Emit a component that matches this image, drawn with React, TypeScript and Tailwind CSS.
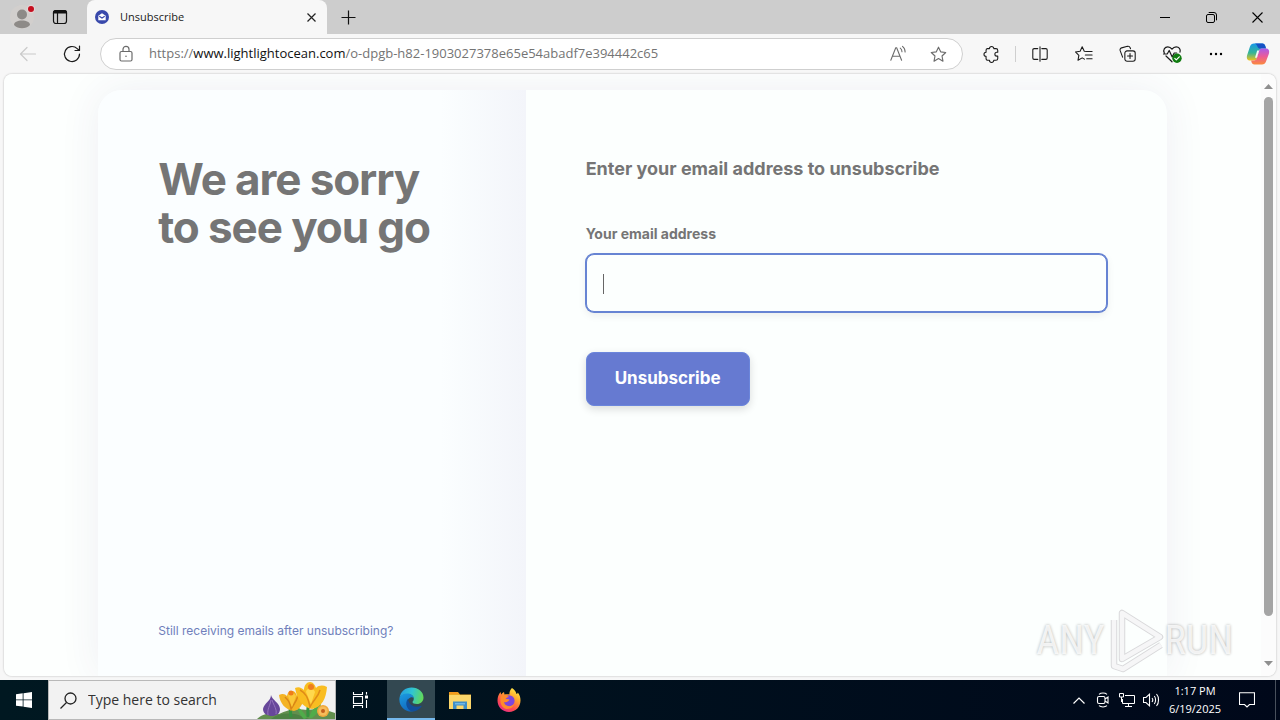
import type { ReactNode } from "react";

const iconBtn = "flex h-8 w-8 items-center justify-center shrink-0";

function Icon({ size = 20, children }: { size?: number; children: ReactNode }) {
  return (
    <svg
      width={size}
      height={size}
      viewBox="0 0 20 20"
      fill="none"
      stroke="currentColor"
      strokeWidth="1.2"
      strokeLinecap="round"
      strokeLinejoin="round"
    >
      {children}
    </svg>
  );
}

function TabBar() {
  return (
    <header className="flex h-[34px] shrink-0 items-stretch bg-[#cdcdcd]">
      <div className="flex w-[87px] items-center rounded-br-lg pl-2">
        <button aria-label="Profile" className="flex h-8 w-7 items-center justify-center">
          <svg width="28" height="28" viewBox="0 0 28 28">
            <circle cx="14" cy="14" r="12" fill="#d2cfcd" />
            <circle cx="14" cy="11.500" r="5" fill="#8d8a87" />
            <path d="M6 22c0-3 3.500-4.500 8-4.500s8 1.500 8 4.500c-2 2.500-5 3.200-8 3.200S8 24.500 6 22z" fill="#8d8a87" />
            <circle cx="23" cy="6" r="4.200" fill="#e3d3d3" />
            <circle cx="23" cy="6" r="3" fill="#c50f1f" />
          </svg>
        </button>
        <button aria-label="Tab actions" className="ml-2 flex h-8 w-8 items-center justify-center">
          <svg width="16" height="16" viewBox="0 0 16 16" fill="none" stroke="#111" strokeWidth="1.200">
            <rect x="1.500" y="1.500" width="13" height="13" rx="2.500" />
            <path d="M1.500 4V3.500a2 2 0 0 1 2-2h9a2 2 0 0 1 2 2V4z" fill="#111" />
            <path d="M5.500 4v10.500" />
          </svg>
        </button>
      </div>
      <div className="flex w-60 items-center rounded-t-lg bg-[#f7f7f7] pr-2 pl-2">
        <svg width="14" height="14" viewBox="0 0 14 14">
          <circle cx="7" cy="7" r="7" fill="#3949ab" />
          <path d="M3.300 5.800 7 3.300l3.700 2.500v4.400H3.300z" fill="#fff" />
          <path d="m4.300 6.300 2.700 1.800 2.700-1.800" stroke="#3949ab" strokeWidth="1.200" fill="none" />
        </svg>
        <span className="ml-[11px] flex-1 text-[11px] text-[#1b1b1b]">Unsubscribe</span>
        <button aria-label="Close tab" className="flex h-4 w-4 items-center justify-center">
          <svg width="9" height="9" viewBox="0 0 9 9" stroke="#222" strokeWidth="1.200">
            <path d="m.5.5 8 8m0-8-8 8" />
          </svg>
        </button>
      </div>
      <button aria-label="New tab" className="flex w-[42px] items-center justify-center">
        <svg width="15" height="15" viewBox="0 0 15 15" stroke="#111" strokeWidth="1.200">
          <path d="M7.500.5v14M.5 7.500h14" />
        </svg>
      </button>
      <div className="ml-auto flex">
        <button aria-label="Minimize" className="flex w-[46px] items-center justify-center">
          <svg width="10" height="10" viewBox="0 0 10 10" stroke="#000">
            <path d="M0 5.500h10" />
          </svg>
        </button>
        <button aria-label="Restore" className="flex w-[46px] items-center justify-center">
          <svg width="11" height="11" viewBox="0 0 11 11" fill="none" stroke="#000">
            <rect x=".5" y="2.500" width="8" height="8" rx="1.500" />
            <path d="M2.700.5h5.300a2.500 2.500 0 0 1 2.500 2.500v5.300" />
          </svg>
        </button>
        <button aria-label="Close window" className="flex w-[46px] items-center justify-center">
          <svg width="11" height="11" viewBox="0 0 11 11" stroke="#000" strokeWidth="1.100">
            <path d="m.5.5 10 10m0-10-10 10" />
          </svg>
        </button>
      </div>
    </header>
  );
}

const star = "m10 2.300 2.300 4.900 5.300.7-3.900 3.700 1 5.400-4.700-2.700L5.300 17l1-5.400L2.400 7.900l5.300-.7z";

function Copilot() {
  return (
    <svg width="24" height="24" viewBox="0 0 24 24">
      <defs>
        <linearGradient id="cpA" x1="0" y1="0" x2="0" y2="1">
          <stop offset="0" stopColor="#1798e8" />
          <stop offset=".55" stopColor="#35b596" />
          <stop offset="1" stopColor="#f2c21c" />
        </linearGradient>
        <linearGradient id="cpB" x1="0" y1="0" x2="0" y2="1">
          <stop offset="0" stopColor="#a95bea" />
          <stop offset=".5" stopColor="#ec5b96" />
          <stop offset="1" stopColor="#fb8a3c" />
        </linearGradient>
      </defs>
      <path d="M8 1.500h8.500c1.500 0 2.300.9 2.800 2.500L20 6.500h-4c-1.500 0-2.300.8-2.700 2L11 16c-.6 1.800-1.500 2.500-3 2.500H4C1 18.500.3 16 1.200 13L4 4.500c.7-2 2-3 4-3z" fill="url(#cpA)" />
      <path d="M8.500 1.500h8c1.500 0 2.300.9 2.800 2.500L20 6.500h-4l-3-.1C11.500 6 11 1.500 8.500 1.500z" fill="#1651c4" />
      <path d="M16 22.500H8.500c-1.800 0-2.600-1-3-2.500l-.4-1.500H8c1.500 0 2.400-.9 2.900-2.500L13.200 8.500c.5-1.500 1.300-2 2.800-2h4c3 0 3.700 2.500 2.800 5.500L20 19.500c-.7 2-2 3-4 3z" fill="url(#cpB)" />
      <path d="M11.200 8.500h2l-2.300 7.300H9z" fill="#f7f7f7" />
    </svg>
  );
}

function Toolbar() {
  return (
    <nav className="flex h-10 shrink-0 items-center bg-[#f7f7f7] pl-3 text-[#1b1b1b]">
      <button aria-label="Back" className={`${iconBtn} text-[#cacaca]`}>
        <Icon>
          <path d="M17.500 10h-15M9 3.500 2.500 10 9 16.500" />
        </Icon>
      </button>
      <button aria-label="Refresh" className={`${iconBtn} ml-3`}>
        <Icon>
          <path d="M17.500 10a7.500 7.500 0 1 1-2.300-5.400L17 6.300M17.500 2v4.500H13" />
        </Icon>
      </button>
      <div className="ml-3 flex h-8 min-w-0 flex-1 items-center rounded-full border border-[#cfcfcf] bg-white pr-2 pl-4 text-[#6b6b6b]">
        <svg width="18" height="18" viewBox="0 0 18 18" fill="none" stroke="currentColor" strokeWidth="1.200">
          <rect x="3" y="6.500" width="12" height="9.500" rx="1.500" />
          <path d="M6 6.500V4.300a3 3 0 0 1 6 0v2.200" />
          <circle cx="9" cy="11.300" r=".8" fill="currentColor" stroke="none" />
        </svg>
        <div className="ml-[14px] min-w-0 flex-1 truncate text-[13px] text-[#747474]">
          https://<span className="text-[#111]">www.lightlightocean.com</span>
          /o-dpgb-h82-1903027378e65e54abadf7e394442c65
        </div>
        <button aria-label="Read aloud" className={iconBtn}>
          <Icon size={18}>
            <path d="M2 17 7.500 3h1L14 17M4 12.500h8M12.500 3.500c1.300 1 1.900 2.300 1.900 4M15 1.500c2 1.500 2.900 3.700 2.900 6.300" />
          </Icon>
        </button>
        <button aria-label="Add to favorites" className={`${iconBtn} ml-2`}>
          <Icon size={19}>
            <path d={star} />
          </Icon>
        </button>
      </div>
      <button aria-label="Extensions" className={`${iconBtn} ml-3`}>
        <Icon size={18}>
          <path d="M6 4h2.300a2.400 2.400 0 0 1 4.800 0h2.400a2 2 0 0 1 2 2v2h-1a2.200 2.200 0 0 0 0 4.400h1v2.600a2 2 0 0 1-2 2h-2.400a2.400 2.400 0 0 1-4.800 0H6.500a2 2 0 0 1-2-2v-2.400a2.300 2.300 0 0 1 0-4.600V6A2 2 0 0 1 6 4z" />
        </Icon>
      </button>
      <div className="ml-2 h-4 w-px bg-[#cfcfcf]" />
      <button aria-label="Split screen" className={`${iconBtn} ml-2`}>
        <Icon size={18}>
          <path d="M7.500 4H3.500A1.500 1.500 0 0 0 2 5.500v9A1.500 1.500 0 0 0 3.500 16h4M12 4h4.500A1.500 1.500 0 0 1 18 5.500v9a1.500 1.500 0 0 1-1.500 1.500H12M10 2v16" />
        </Icon>
      </button>
      <button aria-label="Favorites" className={`${iconBtn} ml-3`}>
        <Icon size={18}>
          <path d="M13 7.200 10.300 7 8 2 5.700 7l-5.200.7L4.300 11.500l-1 5.500L8 14.300l2.500 1.400M13 7.200h6M11.500 11.200H19M13 15.200h6" />
        </Icon>
      </button>
      <button aria-label="Collections" className={`${iconBtn} ml-3`}>
        <Icon size={18}>
          <rect x="6.500" y="6.500" width="11.500" height="11.500" rx="2.500" />
          <path d="M12.250 9.500v5.500M9.500 12.250H15M4 13.500 1.300 6.300c-.5-1.500.2-2.700 1.600-3.100l6.500-1.700c1.300-.3 2.500.3 3 1.600l.4 1" />
        </Icon>
      </button>
      <button aria-label="Browser essentials" className={`${iconBtn} ml-3`}>
        <Icon size={20}>
          <path d="M2.300 9C.7 5.500 3 2.800 5.800 2.800c1.800 0 3.200 1 4.200 2.400 1-1.400 2.400-2.400 4.200-2.400 2.700 0 4.700 2.300 3.800 5.300M1.500 10h3.700l2-3.500 3 6.500 2-4h2.500M4 12l6 5.800" />
          <circle cx="15" cy="14.300" r="4.700" fill="#107c10" stroke="none" />
          <path d="m12.800 14.400 1.500 1.500 3-3.100" stroke="#fff" />
        </Icon>
      </button>
      <button aria-label="Settings and more" className={`${iconBtn} ml-3`}>
        <svg width="14" height="4" viewBox="0 0 14 4">
          <circle cx="2" cy="2" r="1.200" />
          <circle cx="7" cy="2" r="1.200" />
          <circle cx="12" cy="2" r="1.200" />
        </svg>
      </button>
      <button aria-label="Copilot" className={`${iconBtn} mr-1.5 ml-2.5`}>
        <Copilot />
      </button>
    </nav>
  );
}

function UnsubscribeCard() {
  return (
    <main className="flex min-w-0 flex-1 justify-center overflow-hidden bg-[#fdfffe] pt-4 font-['Inter',sans-serif] text-[#757575]">
      <div className="flex w-[85%] rounded-t-3xl bg-[#fcfffe] shadow-[0_0_40px_rgba(70,50,120,0.08)]">
        <section className="flex w-2/5 flex-col justify-between rounded-tl-3xl bg-linear-to-r from-[#fbfeff] from-80% to-[#f3f5fa] px-[60px] pt-[65px] pb-[35px]">
          <h1 className="text-[44px] leading-[48px] font-bold tracking-tight whitespace-nowrap">
            We are sorry
            <br />
            to see you go
          </h1>
          <a href="#help" className="text-xs leading-5 text-[#6f7fbb]">
            Still receiving emails after unsubscribing?
          </a>
        </section>
        <form className="flex-1 px-[60px] pt-[67px]">
          <h2 className="text-lg leading-6 font-bold">Enter your email address to unsubscribe</h2>
          <label htmlFor="email" className="mt-[43px] block text-sm leading-5 font-bold">
            Your email address
          </label>
          <div className="relative mt-[10px]">
            <input
              id="email"
              type="email"
              className="block h-[58px] w-full rounded-lg border border-[#6784d3] bg-[#fcfffe] px-4 caret-transparent shadow-[0_3px_8px_rgba(0,0,0,0.08)] ring-1 ring-[#6784d3] outline-none"
            />
            <span className="absolute top-5 left-[17px] h-5 w-px bg-[#666]" />
          </div>
          <button
            type="button"
            className="mt-10 h-[54px] rounded-lg border border-[#6b86dc] bg-[#667ad1] px-7 text-[17px] font-bold text-white shadow-[0_3px_8px_rgba(0,0,0,0.14)]"
          >
            Unsubscribe
          </button>
        </form>
      </div>
    </main>
  );
}

function Scrollbar() {
  return (
    <div className="flex w-[15px] shrink-0 flex-col items-center bg-[#fcfcfc] pt-2.5 pb-2.5">
      <svg width="9" height="5" viewBox="0 0 9 5">
        <path d="M4.500 0 9 5H0z" fill="#8f8f8f" />
      </svg>
      <div className="mt-2 min-h-0 w-[9px] flex-1">
        <div className="h-[92%] rounded-full bg-[#a5a5a5]" />
      </div>
      <svg width="9" height="5" viewBox="0 0 9 5">
        <path d="M4.500 5 9 0H0z" fill="#8f8f8f" />
      </svg>
    </div>
  );
}

function Watermark() {
  const text =
    "font-['Liberation_Sans_Narrow','Roboto_Condensed','Liberation_Sans',sans-serif] text-[40px] leading-none text-white/80 [text-shadow:0_0_3px_rgba(0,0,0,0.32)]";
  return (
    <div className="pointer-events-none absolute right-[43px] bottom-0.5 flex items-center">
      <span className={text}>ANY</span>
      <svg width="60" height="66" viewBox="0 0 60 66" fill="none" strokeLinejoin="round">
        <g stroke="#d9d9db" strokeWidth="6.500">
          <path d="M17 5v46l38-22z" />
          <path d="M9 12v46l9 3 38-24" />
        </g>
        <g stroke="#f6f6f7" strokeWidth="4.500">
          <path d="M9 12v46l9 3 38-24" />
          <path d="M17 5v46l38-22z" />
        </g>
      </svg>
      <span className={text}>RUN</span>
    </div>
  );
}

function Flowers() {
  return (
    <svg width="78" height="38" viewBox="0 0 78 38" className="shrink-0 self-end">
      <path d="M0 38c5-5 14-7 22-5 8-4 17-6 28-4 10-2 20 0 28 3v6z" fill="#628f4e" />
      <path d="M14 38c8-6 20-7 30-3l8 3z" fill="#4d8143" />
      <path d="M34 36c-1-8-1-13-2-18M51 36c-1-10 1-14 1-20" stroke="#35933f" strokeWidth="3" fill="none" />
      <path d="M50 37c-4-7-6-9-10-11 2 7 4 9 7 12zM52 37c2-8 6-12 12-14-1 7-5 11-9 14z" fill="#50ac4a" />
      <path d="M14 14c1 5 9 8 9 14 0 5-4 7-8 7s-9-2-9-7c1-6 8-8 8-14z" fill="#67479a" />
      <path d="M14 19c-1 6-4 9-3 15M15 19c2 6 5 9 4 14" stroke="#9474bc" fill="none" />
      <path d="M22 14c4-2 6-1 8 1 1-4 2-5 5-5s4 2 5 5c2-3 5-3 7-3 0 8-2 16-10 18-9-1-14-8-15-16z" fill="#f4b323" />
      <path d="M28 16c3 3 5 5 6 12 3-5 5-7 7-13" stroke="#d98617" fill="none" strokeWidth="1.500" />
      <path d="M31 15c1-4 6-4 8 0l-4 11z" fill="#fbc93a" />
      <circle cx="34" cy="12" r="2.500" fill="#ef7d1a" />
      <path d="M38 7c4-2 7 0 9 2 0-5 3-8 6-8s5 3 6 6c3-3 7-3 11-1-1 12-5 20-15 22-10-2-15-10-17-21z" fill="#f9bd21" />
      <path d="M43 9c6 3 8 8 10 17 3-7 8-9 10-17" stroke="#df8b18" fill="none" strokeWidth="1.500" />
      <path d="M49 11c1-5 7-5 9 0l-4 12z" fill="#ffd84d" />
      <circle cx="54" cy="6" r="3" fill="#ee7d1d" />
      <circle cx="66" cy="30" r="6" fill="#f0a83c" />
      <circle cx="66" cy="30" r="4.500" fill="#f7bd5b" />
      <circle cx="66" cy="30" r="2" fill="#c4601c" />
    </svg>
  );
}

const taskBtn = "flex w-[49px] items-center justify-center";
const trayBtn = "flex w-6 items-center justify-center";

function Taskbar() {
  return (
    <footer className="flex h-10 shrink-0 items-stretch bg-linear-to-r from-[#001821] to-[#00081a] text-white">
      <button aria-label="Start" className="flex w-12 items-center justify-center">
        <svg width="16" height="16" viewBox="0 0 16 16" fill="#fff">
          <path d="M0 2.300 6.700 1.300v6.200H0zM7.500 1.200 16 0v7.500H7.500zM0 8.300h6.700v6.300L0 13.700zM7.500 8.300H16V16l-8.500-1.300z" />
        </svg>
      </button>
      <div className="flex w-72 items-center overflow-hidden border border-[#b8b8b8] bg-[#f2f2f2]">
        <svg width="17" height="17" viewBox="0 0 17 17" fill="none" stroke="#222" strokeWidth="1.300" className="ml-[11px] shrink-0">
          <circle cx="10.500" cy="6.500" r="5.500" />
          <path d="m6.500 10.500-6 6" />
        </svg>
        <input
          type="text"
          aria-label="Search"
          placeholder="Type here to search"
          className="ml-[11px] w-0 min-w-0 flex-1 bg-transparent text-sm outline-none placeholder:text-[#333]"
        />
        <Flowers />
      </div>
      <button aria-label="Task view" className={taskBtn}>
        <svg width="17" height="16" viewBox="0 0 17 16" fill="none" stroke="#fff" strokeWidth="1.100">
          <rect x="1.500" y="4.500" width="9" height="7" />
          <path d="M1.500 0v2.500h9V0M1.500 16v-2.500h9V16M14.500 0v2.500M14.500 8v8" />
          <path d="M13 3.500h3v3h-3z" fill="#fff" stroke="none" />
        </svg>
      </button>
      <button aria-label="Microsoft Edge" className="ml-0.5 flex w-12 items-center justify-center border-b-2 border-[#76b9ed] bg-[#334851]">
        <svg width="25" height="25" viewBox="0 0 25 25">
          <defs>
            <linearGradient id="edA" x1="0" y1=".3" x2="1" y2=".5">
              <stop offset="0" stopColor="#259ce0" />
              <stop offset=".5" stopColor="#30c5d2" />
              <stop offset="1" stopColor="#63d957" />
            </linearGradient>
            <linearGradient id="edB" x1="0" y1="0" x2=".5" y2="1">
              <stop offset="0" stopColor="#1b9de2" />
              <stop offset="1" stopColor="#1267bd" />
            </linearGradient>
          </defs>
          <path d="M.5 11C1.500 4.500 6.500.5 12.500.5c7 0 12 4.500 12 10 0 4-3 6.500-6.500 6.500-3 0-4.500-1-4.500-2 0-.8 1.300-1.200 1.300-3.300C14.800 9 12 7 8.500 7 4.500 7 1.500 9 .5 11z" fill="url(#edA)" />
          <path d="M.5 11C1.500 8.500 4.500 6.500 8 6.500c3.800 0 6.500 2 6.700 4.800-.8-.9-2-1.300-3.200-.8-2.500.8-3.500 3.500-2.500 6.500 1.300 4 5.500 6 10 4.500-2 2-4.500 3-6.500 3C5.500 24.500-.5 18.500.5 11z" fill="url(#edB)" />
          <path d="M9 11.800c-3.500 4-1.500 10.700 3.800 12.700 4 0 7.500-2 9.700-5 .4-.6-.1-.9-.6-.7-5.400 2.400-11.900.2-12.900-7z" fill="#124e99" />
        </svg>
      </button>
      <button aria-label="File Explorer" className={taskBtn}>
        <svg width="22" height="19" viewBox="0 0 22 19">
          <path d="M0 1h9l2 2.500h11V18H0z" fill="#e9a824" />
          <path d="M0 4h22v14H0z" fill="#fbd66a" />
          <path d="M0 1h8l2 2H0z" fill="#f29a1d" />
          <path d="M4 18v-7.500h14V18h-3.500v-3.500h-7V18z" fill="#3f8ec7" />
          <path d="M6 12h10v1.500H6z" fill="#6fb7e6" />
        </svg>
      </button>
      <button aria-label="Firefox" className={taskBtn}>
        <svg width="24" height="24" viewBox="0 0 24 24">
          <defs>
            <linearGradient id="ffA" x1=".8" y1="0" x2=".2" y2="1">
              <stop offset="0" stopColor="#fff04a" />
              <stop offset=".35" stopColor="#ffa52c" />
              <stop offset=".7" stopColor="#ff4a4f" />
              <stop offset="1" stopColor="#e62b8b" />
            </linearGradient>
          </defs>
          <path d="M15 0c3 2 4 4 4.500 6 1-.2 1.300-1 1.300-1.500C23 7 23.500 10 23.500 12.500 23.500 19 18.500 24 12 24S.5 19 .5 12.500c0-3.500 1.200-6.500 3-8.500l.7 2.500C5 5.300 6 4.500 7 4l.5 2.500c1.500-.5 3.500-.5 5 0C12 4 13.500 1.500 15 0z" fill="url(#ffA)" />
          <circle cx="12" cy="12.800" r="5.600" fill="#7e46dc" />
          <path d="M4 8c3-2 6-1 8 1-2 .3-3 1-3.500 2.200 1.500-.3 3 .3 4 .3-1 2.500-3.500 3-5.500 2.500C7.500 18 13 20 17 16c-1 4-4 5-7 5-5-.5-8-6-6-13z" fill="#ff8b2b" />
        </svg>
      </button>
      <div className="ml-auto flex items-stretch">
        <button aria-label="Show hidden icons" className={trayBtn}>
          <svg width="12" height="7" viewBox="0 0 12 7" fill="none" stroke="#fff" strokeWidth="1.200">
            <path d="m.5 6.500 5.500-5.500 5.500 5.500" />
          </svg>
        </button>
        <button aria-label="Meet now" className={trayBtn}>
          <svg width="14" height="16" viewBox="0 0 14 16" fill="none" stroke="#fff" strokeWidth="1.100">
            <rect x="1.500" y="4.500" width="7.500" height="7" rx="1.500" />
            <path d="m9 7 3-2v6L9 9M3 2.300C5 .6 9 .6 11 2.300M3 13.700c2 1.700 6 1.700 8 0" />
          </svg>
        </button>
        <button aria-label="Network" className={trayBtn}>
          <svg width="16" height="14" viewBox="0 0 16 14" fill="none" stroke="#fff">
            <path d="M6 2.500h9.500v8H3.500V6M9.500 10.500v3M6 13.500h7" />
            <path d="M.5.5h4v3.500h-4zM2.500 4v5" />
          </svg>
        </button>
        <button aria-label="Volume" className={trayBtn}>
          <svg width="17" height="14" viewBox="0 0 17 14" fill="none" stroke="#fff" strokeWidth="1.100">
            <path d="M.5 4.500H3l3.500-3.300v11.600L3 9.500H.5zM9 5c.8 1 .8 3 0 4M11.300 3c1.700 2 1.700 6 0 8M13.500 1c2.700 3 2.700 9 0 12" />
          </svg>
        </button>
        <button className="flex w-16 flex-col items-center justify-center text-[11px] leading-[18px] whitespace-nowrap">
          <span>1:17 PM</span>
          <span>6/19/2025</span>
        </button>
        <button aria-label="Notifications" className="flex w-10 items-center justify-center">
          <svg width="16" height="16" viewBox="0 0 16 16" fill="none" stroke="#fff" strokeWidth="1.100">
            <path d="M.5.8h15v11.700h-5L8 15l-2.500-2.500h-5z" />
          </svg>
        </button>
        <div className="ml-2 w-[5px] border-l border-[#48505c]" />
      </div>
    </footer>
  );
}

export default function App() {
  return (
    <div className="flex h-screen flex-col bg-[#f7f7f7] font-['Open_Sans','Noto_Sans',sans-serif]">
      <TabBar />
      <Toolbar />
      <div className="relative mx-1 mb-1 flex min-h-0 flex-1 overflow-hidden rounded-lg shadow-[0_0_2px_rgba(0,0,0,0.3)]">
        <UnsubscribeCard />
        <Scrollbar />
        <Watermark />
      </div>
      <Taskbar />
    </div>
  );
}
